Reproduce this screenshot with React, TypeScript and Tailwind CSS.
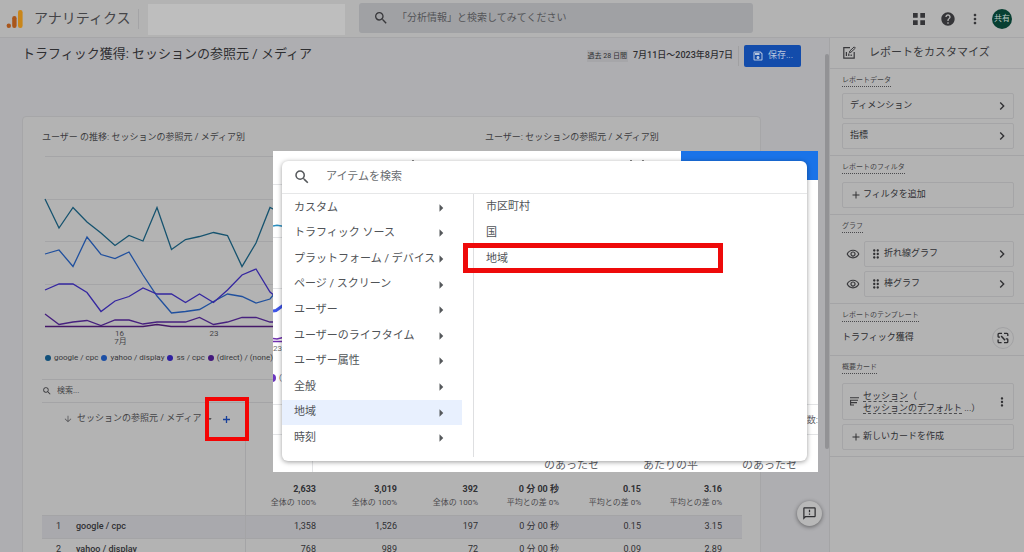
import React from "react";
import {
  MdArrowDropDown,
  MdArrowRight,
  MdAdd,
  MdChevronRight,
  MdDragIndicator,
  MdHelp,
  MdMoreVert,
  MdOutlineArrowDownward,
  MdOutlineFeedback,
  MdOutlineRemoveRedEye,
  MdOutlineSave,
  MdSearch,
} from "react-icons/md";

const legend = [
  { label: "google / cpc", dot: "bg-[#11507a]" },
  { label: "yahoo / display", dot: "bg-[#1c4fa5]" },
  { label: "ss / cpc", dot: "bg-[#2e1fa0]" },
  { label: "(direct) / (none)", dot: "bg-[#43187c]" },
];

const totals = [
  ["2,633", "全体の 100%"],
  ["3,019", "全体の 100%"],
  ["392", "全体の 100%"],
  ["0 分 00 秒", "平均との差 0%"],
  ["0.15", "平均との差 0%"],
  ["3.16", "平均との差 0%"],
];

const rows = [
  { name: "google / cpc", cells: ["1,358", "1,526", "197", "0 分 00 秒", "0.15", "3.15"] },
  { name: "yahoo / display", cells: ["768", "989", "72", "0 分 00 秒", "0.09", "2.89"] },
];

const categories = [
  "カスタム",
  "トラフィック ソース",
  "プラットフォーム / デバイス",
  "ページ / スクリーン",
  "ユーザー",
  "ユーザーのライフタイム",
  "ユーザー属性",
  "全般",
  "地域",
  "時刻",
];

const regions = ["市区町村", "国", "地域"];

function Header() {
  return (
    <header className="flex h-[38px] shrink-0 items-center border-b border-[#a6a6a8] bg-[#b3b3b3]">
      <div className="flex w-[148px] shrink-0 items-center">
        <svg className="ml-[6px] h-5 w-[18px]" viewBox="0 0 18 20" aria-hidden="true">
          <rect x="12" y="1" width="4.6" height="18" rx="2.2" fill="#c9861a" />
          <rect x="6.2" y="7" width="4.4" height="12" rx="2.2" fill="#a9561b" />
          <circle cx="2.8" cy="16.8" r="2.2" fill="#a9561b" />
        </svg>
        <span className="ml-[10px] text-[14px] whitespace-nowrap text-[#454548]">アナリティクス</span>
        <span className="ml-2 h-5 w-px bg-[#a4a4a6]" />
      </div>
      <div className="mt-[2px] h-[31px] w-[197px] shrink-0 bg-[#bebebe]" />
      <label className="mb-[2px] ml-[14px] flex h-[30px] min-w-0 flex-1 items-center rounded-[3px] bg-[#a0a1a4] pl-[14px]">
        <MdSearch className="h-4 w-4 text-[#38383b]" />
        <input
          type="text"
          aria-label="検索"
          placeholder="「分析情報」と検索してみてください"
          className="ml-2 min-w-0 flex-1 bg-transparent text-[10px] outline-none placeholder:text-[#545558] placeholder:opacity-100"
        />
      </label>
      <nav className="flex w-[271px] shrink-0 items-center justify-end pr-3">
        <button type="button" aria-label="アプリ" className="flex">
          <svg className="h-3 w-3" viewBox="0 0 12 12" fill="#353538">
            <path d="M0 0h4.700v4.700H0zM7.300 0H12v4.700H7.300zM0 7.300h4.700V12H0zM7.300 7.300H12V12H7.300z" />
          </svg>
        </button>
        <button type="button" aria-label="ヘルプ" className="ml-[15px] flex">
          <MdHelp className="h-4 w-4 text-[#353538]" />
        </button>
        <button type="button" aria-label="その他" className="ml-[11px] flex">
          <MdMoreVert className="h-4 w-4 text-[#353538]" />
        </button>
        <button
          type="button"
          className="ml-[9px] flex h-5 w-5 items-center justify-center rounded-full bg-[#073f32] text-[8px] text-[#b9c6c1]"
        >
          共有
        </button>
      </nav>
    </header>
  );
}

function LineChart() {
  return (
    <svg
      className="h-[198px] w-[443px]"
      viewBox="42 150 443 198"
      fill="none"
      strokeWidth="1.3"
      role="img"
      aria-label="ユーザーの推移"
    >
      <g stroke="#a5a5a7" strokeWidth="1">
        <path d="M45 156.5H480M45 199.5H480M45 241.5H480M45 284.5H480" />
      </g>
      <polyline
        stroke="#16536f"
        points="45,199 59,228 73,207.5 87,222 101,233 115,245.5 129,235.5 143,241 157,207.5 171.5,249.5 185.5,239.5 199.5,236.5 213.5,232.5 227.5,235.5 242,266.5 256,243 270,207.5 275,210"
      />
      <polyline
        stroke="#20509e"
        points="45,254 59,250 73,266.5 87,237 101,254.5 115,258.5 129,252 143,275 157,296 171.5,313 185.5,311.5 199.5,309.5 213.5,301.5 227.5,294 242,296.5 256,303 270,299 275,293"
      />
      <polyline
        stroke="#3527a0"
        points="45,290 59,284 73,284 87,292.5 101,311.5 115,301 129,296.5 143,288 157,294 171.5,294 185.5,302.5 199.5,294 213.5,302.5 227.5,290 242,275 256,269 270,292 275,296"
      />
      <polyline
        stroke="#47217f"
        points="45,314 59,324.5 73,322 87,320.5 101,325.5 115,320 129,320 143,324 157,322 185.5,322 199.5,317.5 213.5,324.5 227.5,322 242,317.5 256,317.5 270,322 275,322"
      />
      <polyline stroke="#451868" points="45,326.5 143,326.5 157,324.5 171,326.5 275,326.5" />
      <g fill="#454548" stroke="none" fontSize="8" textAnchor="middle">
        <text x="119.5" y="336">16</text>
        <text x="120.5" y="344">7月</text>
        <text x="214" y="336">23</text>
      </g>
    </svg>
  );
}

function ReportTable() {
  return (
    <table className="w-full table-fixed border-collapse text-[9px] text-[#303033]">
      <colgroup>
        <col className="w-[203px]" />
        <col className="w-[81px]" />
        <col className="w-[81px]" />
        <col className="w-[81px]" />
        <col className="w-[81px]" />
        <col className="w-[82px]" />
        <col />
      </colgroup>
      <thead>
        <tr className="h-[73px] align-top">
          <th scope="col" className="border-r border-[#a4a4a6] p-0 font-normal">
            <div className="relative flex h-[31px] items-center pl-[21px]">
              <MdOutlineArrowDownward className="h-[10px] w-[10px] text-[#58585b]" />
              <span className="ml-1 whitespace-nowrap text-[#434346]">セッションの参照元 / メディア</span>
              <MdArrowDropDown className="ml-1 h-2 w-2" />
              <div className="absolute top-[-6px] right-[-4px] flex h-11 w-11 items-center justify-center border-4 border-[#f40404]">
                <button type="button" aria-label="ディメンションを追加" className="flex">
                  <svg className="h-[7px] w-[7px]" viewBox="0 0 7 7" stroke="#173f9a" strokeWidth="1.3">
                    <path d="M3.500 0v7M0 3.500h7" />
                  </svg>
                </button>
              </div>
            </div>
          </th>
          {totals.map((_, i) => (
            <td key={i} />
          ))}
        </tr>
      </thead>
      <tbody>
        <tr className="h-[39px]">
          <td className="border-r border-[#a4a4a6]" />
          {totals.map(([value, note], i) => (
            <td
              key={i}
              className="p-0 pt-[2px] pr-[10px] text-right whitespace-nowrap last:pr-5"
            >
              <div className="leading-[14px] font-bold">{value}</div>
              <div className="text-[8px] leading-[14px] text-[#4b4b4e]">{note}</div>
            </td>
          ))}
        </tr>
        {rows.map((row, i) => (
          <tr
            key={row.name}
            className="h-[23px] border-t border-[#a4a4a6] odd:bg-[#b3b3b3] even:bg-[#a9a9ad]"
          >
            <th scope="row" className="border-r border-[#a4a4a6] p-0 text-left font-medium">
              <span className="inline-block w-[34px] pl-[14px] font-normal">{i + 1}</span>
              {row.name}
            </th>
            {row.cells.map((cell, j) => (
              <td key={j} className="p-0 pr-[10px] text-right whitespace-nowrap last:pr-5">
                {cell}
              </td>
            ))}
          </tr>
        ))}
      </tbody>
    </table>
  );
}

function Report() {
  return (
    <main className="flex min-w-0 flex-1 bg-[#aeaeb1]">
      <div className="flex min-w-0 flex-1 flex-col pl-[22px]">
        <div className="flex h-9 shrink-0 items-center pr-6">
          <h1 className="mb-1 flex-1 text-[13px] whitespace-nowrap text-[#2e2e31]">
            トラフィック獲得: セッションの参照元 / メディア
          </h1>
          <span className="bg-[#a6a6a9] px-px text-[7px] leading-3 whitespace-nowrap text-[#2e2e31]">
            過去 28 日間
          </span>
          <span className="ml-[5px] text-[9px] font-medium whitespace-nowrap text-[#2e2e31]">
            7月11日～2023年8月7日
          </span>
          <span className="ml-[5px] h-5 w-px bg-[#a0a0a2]" />
          <button
            type="button"
            className="ml-[5px] flex h-[22px] w-[57px] items-center justify-center gap-1 rounded-[2px] bg-[#134cab] text-[9px] text-[#b8c6de]"
          >
            <MdOutlineSave className="h-3 w-3" />
            保存...
          </button>
        </div>
        <section className="mt-[42px] mr-16 shrink-0 grow rounded-t-[4px] border border-[#a6a6a8] bg-[#b3b3b3] pr-[18px] pl-[19px]">
          <div className="grid grid-cols-[443px_1fr] pt-[10px] text-[9px] leading-5 whitespace-nowrap text-[#3b3b3e]">
            <h2>ユーザー の推移: セッションの参照元 / メディア別</h2>
            <h2>ユーザー: セッションの参照元 / メディア別</h2>
          </div>
          <div className="mt-[3px]">
            <LineChart />
          </div>
          <ul className="flex h-[19px] items-center gap-[3px] pl-[3px] text-[8px] whitespace-nowrap text-[#39393c]">
            {legend.map((item) => (
              <li key={item.label} className="flex items-center gap-[3px]">
                <span className={`h-[6px] w-[6px] rounded-full ${item.dot}`} />
                {item.label}
              </li>
            ))}
          </ul>
          <label className="mt-3 flex h-6 items-center border-y border-[#a4a4a6]">
            <MdSearch className="h-[10px] w-[10px] text-[#38383b]" />
            <input
              type="text"
              aria-label="表を検索"
              placeholder="検索..."
              className="ml-[5px] flex-1 bg-transparent text-[8px] outline-none placeholder:text-[#454548] placeholder:opacity-100"
            />
          </label>
          <ReportTable />
        </section>
      </div>
      <div className="flex w-1 shrink-0 pt-4">
        <div className="h-[395px] w-full rounded-[2px] bg-[#929295]" />
      </div>
    </main>
  );
}

function PanelSection({ label, children }: { label: string; children: React.ReactNode }) {
  return (
    <section className="border-b border-[#a4a4a6] pt-[6px] pr-[10px] pb-[6px] pl-3">
      <h3 className="flex">
        <span className="border-b border-dotted border-[#4b4b4e] text-[7px] leading-[11px] text-[#434346]">
          {label}
        </span>
      </h3>
      {children}
    </section>
  );
}

const panelButton =
  "flex h-[26px] w-full items-center rounded-[2px] border border-[#a5a5a7] pl-[7px] pr-[3px] text-left text-[9px] text-[#303033]";

function CustomizePanel() {
  return (
    <aside className="w-[195px] shrink-0 border-l border-[#a4a4a6] bg-[#b3b3b3]">
      <div className="flex h-[31px] items-center border-b border-[#a4a4a6] pl-3">
        <svg className="h-[14px] w-[14px]" viewBox="0 0 14 14" fill="none" stroke="#38383b" strokeWidth="1.2">
          <path d="M8 1.6H1.8v10.6h10.4V6M4.4 6v4M6.8 7.6V10M9.2 8.4V10" />
          <path d="M7.4 6.6l.4-1.6 4.4-4.1 1.2 1.2-4.4 4.1z" strokeWidth="1" />
        </svg>
        <h2 className="ml-[13px] text-[11px] whitespace-nowrap text-[#38383b]">レポートをカスタマイズ</h2>
      </div>
      <PanelSection label="レポートデータ">
        <div className="mt-[6px] flex flex-col gap-1">
          {["ディメンション", "指標"].map((name) => (
            <button type="button" key={name} className={panelButton}>
              <span className="flex-1">{name}</span>
              <MdChevronRight className="h-4 w-4" />
            </button>
          ))}
        </div>
      </PanelSection>
      <PanelSection label="レポートのフィルタ">
        <button type="button" className={`${panelButton} mt-2`}>
          <MdAdd className="mr-px h-3 w-3" />
          フィルタを追加
        </button>
      </PanelSection>
      <PanelSection label="グラフ">
        <div className="mt-2 flex flex-col gap-1">
          {["折れ線グラフ", "棒グラフ"].map((name) => (
            <div key={name} className="flex items-center">
              <button type="button" aria-label={`${name}の表示`} className="mr-1 ml-1 flex">
                <MdOutlineRemoveRedEye className="h-[14px] w-[14px] text-[#38383b]" />
              </button>
              <button type="button" className={panelButton}>
                <MdDragIndicator className="-ml-[3px] mr-px h-[14px] w-[14px]" />
                <span className="flex-1">{name}</span>
                <MdChevronRight className="h-4 w-4" />
              </button>
            </div>
          ))}
        </div>
      </PanelSection>
      <PanelSection label="レポートのテンプレート">
        <div className="mt-[5px] flex items-center justify-between text-[9px] text-[#2c2c2f]">
          トラフィック獲得
          <button
            type="button"
            aria-label="テンプレートを変更"
            className="flex h-[22px] w-[22px] items-center justify-center rounded-full border border-[#a2a2a4]"
          >
            <svg className="h-3 w-3" viewBox="0 0 12 12" fill="none" stroke="#2c2c2f" strokeWidth="1.3">
              <path d="M5 1.300H2a.9.9 0 0 0-.9.9V4.400a.8.8 0 0 0 .8.8H3M7 1.300h2.900a.9.9 0 0 1 .9.9V4M1.100 7.600V9.800a.9.9 0 0 0 .9.9H4.600M7 10.700h2.900a.9.9 0 0 0 .9-.9V7.600a.8.8 0 0 0-.8-.8H8.800" />
              <path d="M4.200 4l3.800 4.200" strokeWidth="1.500" />
            </svg>
          </button>
        </div>
      </PanelSection>
      <PanelSection label="概要カード">
        <div className="mt-[9px] flex flex-col gap-1">
          <div className="flex h-[37px] items-center rounded-[2px] border border-[#a5a5a7] pr-1 pl-[7px] text-[9px] text-[#303033]">
            <svg className="h-[9px] w-[9px] shrink-0" viewBox="0 0 9 9" fill="none" stroke="#38383b" strokeWidth="1.1">
              <path d="M0 .8h9M0 3.200h8M0 5.600h7M0 8h4M.6 3v5.400" />
            </svg>
            <div className="ml-1 flex-1 leading-3 whitespace-nowrap">
              <div>
                <span className="border-b border-dashed border-[#4b4b4e]">セッション</span>（
              </div>
              <div>
                <span className="border-b border-dashed border-[#4b4b4e]">セッションのデフォルト</span> ...）
              </div>
            </div>
            <button type="button" aria-label="カードのメニュー" className="-ml-4 flex">
              <MdMoreVert className="h-[14px] w-[14px]" />
            </button>
          </div>
          <button type="button" className={panelButton}>
            <MdAdd className="mr-px h-3 w-3" />
            新しいカードを作成
          </button>
        </div>
      </PanelSection>
    </aside>
  );
}

function DimensionPicker() {
  return (
    <div className="absolute top-[151px] left-[273px] h-[321px] w-[545px] overflow-hidden bg-white">
      <div className="absolute top-0 right-0 h-[29px] w-[137px] bg-[#1a73e8]" />
      <svg className="absolute inset-0 h-full w-full" viewBox="0 0 545 321" fill="none" aria-hidden="true">
        <path stroke="#e3e4e6" d="M0 33.5h10M0 86.5h10M0 137.5h10M0 253.5h10M0 283.5h10M534 253.5h11M534 283.5h11M39.5 310v11" />
        <path stroke="#2c8fc0" strokeWidth="1.6" d="M0 75l4-.8 6 1" />
        <path stroke="#3d54e8" strokeWidth="3" d="M0 160l3-.5 7-5" />
        <path stroke="#7030b0" strokeWidth="1.5" d="M0 187.5l4 .5 6-1.5M0 190.5h10" />
        <circle cx="-1" cy="227" r="4" fill="#6a35c0" />
        <path stroke="#888" d="M139 9.5h2M357 9.5h2M369 9.5h2" />
      </svg>
      <span className="absolute top-[192px] left-0 text-[8px] leading-3 text-[#6a6d70]">23</span>
      <span className="absolute top-[221px] left-[6px] text-[8px] leading-3 text-[#5f6368]">(</span>
      <span className="absolute top-[262px] right-0 text-[9px] leading-[14px] text-[#5f6368]">数:</span>
      <div className="absolute bottom-0 left-[271px] flex h-3 items-center gap-11 text-[11px] leading-3 whitespace-nowrap text-[#5f6368]">
        <span>のあったセ</span>
        <span>あたりの平</span>
        <span>のあったセ</span>
      </div>
      <div
        role="dialog"
        aria-label="アイテムを検索"
        className="absolute top-[10px] right-[11px] bottom-[11px] left-[9px] flex flex-col rounded-[6px] bg-white shadow-[0_1px_5px_rgba(0,0,0,0.4)]"
      >
        <label className="flex h-[33px] shrink-0 items-center border-b border-[#e6e7e8] pl-[11px]">
          <MdSearch className="h-[18px] w-[18px] text-[#55585b]" />
          <input
            type="text"
            aria-label="アイテムを検索"
            placeholder="アイテムを検索"
            className="ml-[15px] flex-1 bg-transparent text-[11px] outline-none placeholder:text-[#6a6d71] placeholder:opacity-100"
          />
        </label>
        <div className="flex flex-1 pb-1 text-[11px] text-[#505357]">
          <ul className="flex w-[180px] flex-col pt-px pb-[6px]">
            {categories.map((name) => (
              <li key={name} className="flex flex-1">
                <button
                  type="button"
                  className={`flex flex-1 items-center justify-between pr-3 pl-3 whitespace-nowrap ${
                    name === "地域" ? "bg-[#e8f0fe]" : ""
                  }`}
                >
                  {name}
                  <MdArrowRight className="-ml-2 h-[18px] w-[18px] shrink-0 text-[#55585b]" />
                </button>
              </li>
            ))}
          </ul>
          <ul className="ml-[11px] flex flex-1 flex-col border-l border-[#dedfe1]">
            {regions.map((name) => (
              <li key={name} className="relative flex h-[26px] items-center">
                <button type="button" className="flex-1 pt-px pl-3 text-left">
                  {name}
                </button>
                {name === "地域" && (
                  <span className="pointer-events-none absolute -top-[3px] -left-[11px] h-[30px] w-[260px] border-[5px] border-[#ee0a0a]" />
                )}
              </li>
            ))}
          </ul>
        </div>
      </div>
    </div>
  );
}

export default function App() {
  return (
    <div
      lang="ja"
      className="relative flex h-screen flex-col overflow-hidden bg-[#aeaeb1] font-['Roboto','Noto_Sans_CJK_JP',sans-serif]"
    >
      <Header />
      <div className="flex min-h-0 flex-1">
        <Report />
        <CustomizePanel />
      </div>
      <DimensionPicker />
      <button
        type="button"
        aria-label="フィードバックを送信"
        className="absolute top-[501px] right-[202px] flex h-[25px] w-[25px] items-center justify-center rounded-full bg-[#b8b8b8] shadow-[0_1px_4px_rgba(0,0,0,0.45)]"
      >
        <MdOutlineFeedback className="h-[15px] w-[15px] text-[#2e2e31]" />
      </button>
    </div>
  );
}
